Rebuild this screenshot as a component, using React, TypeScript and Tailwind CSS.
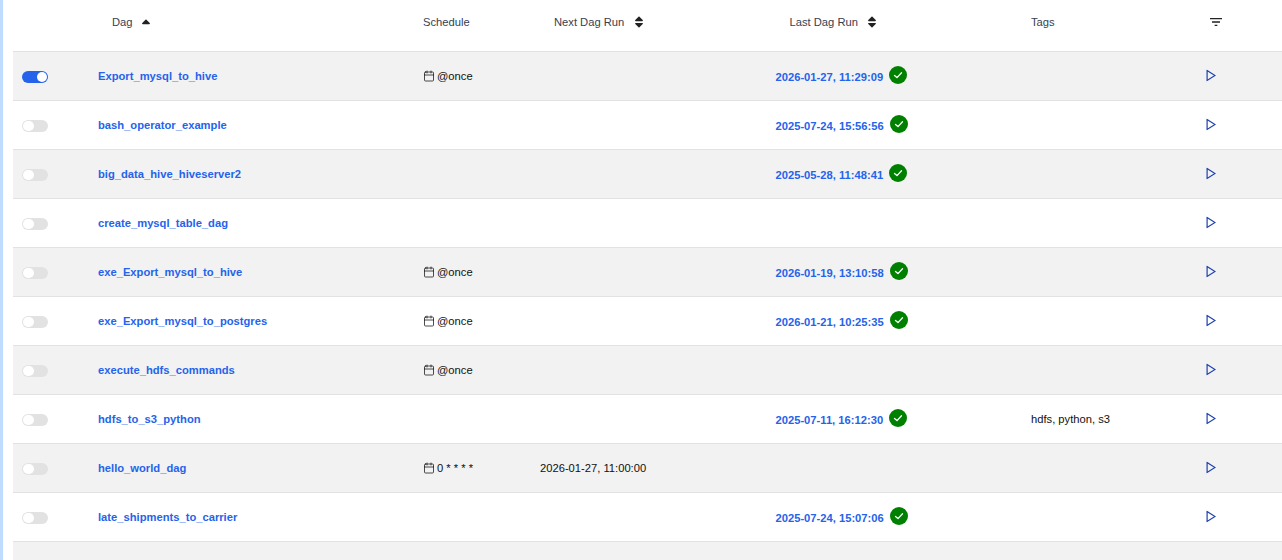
import { Calendar } from 'lucide-react';
import { FaSort, FaSortUp } from 'react-icons/fa';
import { MdFilterList } from 'react-icons/md';

interface Dag {
  name: string;
  enabled?: boolean;
  schedule?: string;
  nextRun?: string;
  lastRun?: string;
  tags?: string;
}

const dags: Dag[] = [
  { name: 'Export_mysql_to_hive', enabled: true, schedule: '@once', lastRun: '2026-01-27, 11:29:09' },
  { name: 'bash_operator_example', lastRun: '2025-07-24, 15:56:56' },
  { name: 'big_data_hive_hiveserver2', lastRun: '2025-05-28, 11:48:41' },
  { name: 'create_mysql_table_dag' },
  { name: 'exe_Export_mysql_to_hive', schedule: '@once', lastRun: '2026-01-19, 13:10:58' },
  { name: 'exe_Export_mysql_to_postgres', schedule: '@once', lastRun: '2026-01-21, 10:25:35' },
  { name: 'execute_hdfs_commands', schedule: '@once' },
  { name: 'hdfs_to_s3_python', lastRun: '2025-07-11, 16:12:30', tags: 'hdfs, python, s3' },
  { name: 'hello_world_dag', schedule: '0 * * * *', nextRun: '2026-01-27, 11:00:00' },
  { name: 'late_shipments_to_carrier', lastRun: '2025-07-24, 15:07:06' },
];

const cols = 'grid grid-cols-[85px_325px_117px_235px_256px_175px_1fr] items-center';

function Toggle({ on }: { on?: boolean }) {
  return (
    <div className={`mt-[2px] flex h-[12.5px] w-[26px] items-center rounded-full p-px ${on ? 'justify-end bg-[#2563eb]' : 'bg-[#e2e2e2]'}`}>
      <div className="h-[10.5px] w-[10.5px] rounded-full bg-white" />
    </div>
  );
}

function SuccessBadge() {
  return (
    <span className="flex h-[18px] w-[18px] -translate-y-px items-center justify-center rounded-full bg-[#008000]">
      <svg width="10" height="10" viewBox="0 0 10 10" fill="none" stroke="white" strokeWidth="1.3" strokeLinecap="round" strokeLinejoin="round">
        <path d="M1.5 5.4 4 7.6 8.5 2.8" />
      </svg>
    </span>
  );
}

function TriggerIcon() {
  return (
    <svg width="10" height="12" viewBox="0 0 10 12" fill="none" stroke="#1e40af" strokeWidth="1.2" strokeLinejoin="miter" className="-translate-y-[0.5px]">
      <path d="M1.1 1 9 6 1.1 11Z" />
    </svg>
  );
}

function DagRow({ dag, index }: { dag: Dag; index: number }) {
  return (
    <div className={`${cols} h-[49px] border-b border-[#e2e2e2] ${index % 2 === 0 ? 'bg-[#f2f2f2]' : 'bg-white'}`}>
      <div className="pl-[9px]">
        <Toggle on={dag.enabled} />
      </div>
      <div className="font-bold text-[#2563eb]">{dag.name}</div>
      <div>
        {dag.schedule && (
          <span className="flex items-center gap-[2px] text-[#111]">
            <Calendar size={12} strokeWidth={1.5} />
            {dag.schedule}
          </span>
        )}
      </div>
      <div className="text-[#111]">{dag.nextRun}</div>
      <div className="pl-[0.5px]">
        {dag.lastRun && (
          <span className="flex items-center gap-[6px] font-bold text-[#2563eb]">
            <span className="translate-y-px">{dag.lastRun}</span>
            <SuccessBadge />
          </span>
        )}
      </div>
      <div className="text-[#111]">{dag.tags}</div>
      <div>
        <TriggerIcon />
      </div>
    </div>
  );
}

export default function App() {
  return (
    <div className="h-[560px] overflow-hidden border-l-[3px] border-[#bfdbfe] bg-white pl-[10px] text-[11.2px] font-['Liberation_Sans',Arial,sans-serif]">
      <div className={`${cols} h-[52px] border-b border-[#e2e2e2] pb-[7px] text-[#374151]`}>
        <div />
        <div className="flex items-center gap-[6px] pl-[14px]">
          Dag
          <FaSortUp size={14} className="translate-y-[3px] text-[#222]" />
        </div>
        <div>Schedule</div>
        <div className="flex items-center gap-[8px] pl-[14px]">
          Next Dag Run
          <FaSort size={14} className="text-[#222]" />
        </div>
        <div className="flex items-center gap-[7px] pl-[14.5px]">
          Last Dag Run
          <FaSort size={14} className="text-[#222]" />
        </div>
        <div>Tags</div>
        <div>
          <MdFilterList size={16} className="ml-[2px] text-[#222]" />
        </div>
      </div>
      {dags.map((dag, i) => (
        <DagRow key={dag.name} dag={dag} index={i} />
      ))}
      <div className="h-[49px] bg-[#f2f2f2]" />
    </div>
  );
}
